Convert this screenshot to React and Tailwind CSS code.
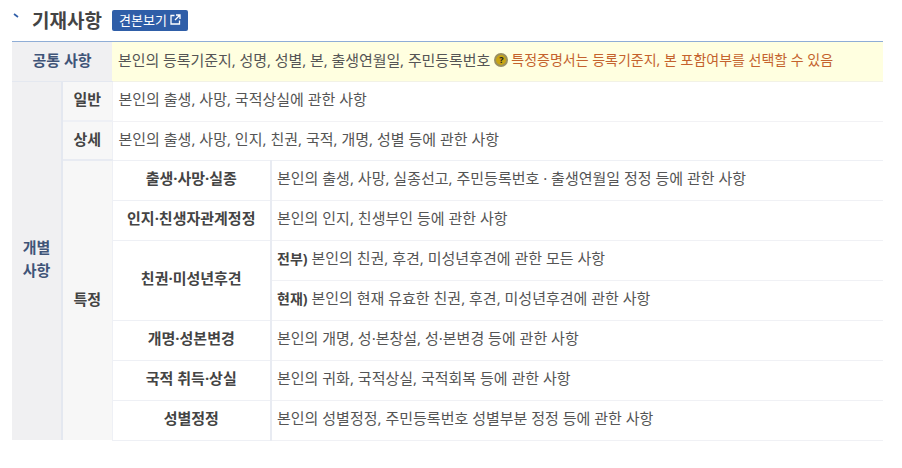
import React from "react"

const rows = [
  { name: "출생·사망·실종", text: "본인의 출생, 사망, 실종선고, 주민등록번호 · 출생연월일 정정 등에 관한 사항" },
  { name: "인지·친생자관계정정", text: "본인의 인지, 친생부인 등에 관한 사항" },
  { name: "친권·미성년후견", span: 2, bold: "전부)", text: " 본인의 친권, 후견, 미성년후견에 관한 모든 사항" },
  { bold: "현재)", text: " 본인의 현재 유효한 친권, 후견, 미성년후견에 관한 사항" },
  { name: "개명·성본변경", text: "본인의 개명, 성·본창설, 성·본변경 등에 관한 사항" },
  { name: "국적 취득·상실", text: "본인의 귀화, 국적상실, 국적회복 등에 관한 사항" },
  { name: "성별정정", text: "본인의 성별정정, 주민등록번호 성별부분 정정 등에 관한 사항" },
]

function App() {
  return (
    <div className="w-[902px] h-[468px] bg-white pl-3 pr-[19px] text-[15px] text-[#555] font-['Noto_Sans','Noto_Sans_CJK_KR',sans-serif]">
      <div className="h-[41px] flex items-start pt-[10px]">
        <span className="w-[20px] pt-[3px] pl-px">
          <svg width="6" height="5" viewBox="0 0 6 5" fill="none" stroke="#2f5ea8" strokeWidth="1.6">
            <path d="M1 1l4 3" />
          </svg>
        </span>
        <h2 className="text-[19px] font-bold leading-[22px] text-[#444]">기재사항</h2>
        <a className="ml-[10px] h-[21px] w-[76px] flex items-center justify-center gap-[3px] rounded-[2px] bg-[#2f5ea8] text-white text-[13px]">
          견본보기
          <svg width="11" height="11" viewBox="0 0 11 11" fill="none" stroke="white" strokeWidth="1.3" className="mb-[3px]">
            <path d="M4.5 1.5H1v8.5h8.5V6.5" />
            <path d="M5 6l4.5-4.5M6 1h4v4" />
          </svg>
        </a>
      </div>
      <div className="w-[871px] border-t border-[#8fadd6]">
        <table className="w-full table-fixed border-collapse [&_td]:pb-[3px] [&_th]:pb-[3px]">
          <colgroup>
            <col className="w-[50px]" />
            <col className="w-[50px]" />
            <col className="w-[159px]" />
            <col className="w-[612px]" />
          </colgroup>
          <tbody>
            <tr className="h-[39px]">
              <th colSpan={2} className="bg-[#f0f0f2] border-b border-[#e4e8f0] text-[#3f5478] font-bold">공통 사항</th>
              <td colSpan={2} className="bg-[#ffffe0] border-b border-[#f2f2e6] pl-[6px]">
                <div className="flex items-center whitespace-nowrap">
                  <span className="tracking-[-0.07px]">본인의 등록기준지, 성명, 성별, 본, 출생연월일, 주민등록번호</span>
                  <span className="ml-[4px] mr-[3px] w-[14px] h-[14px] rounded-full bg-[#c9a514] border-2 border-[#9a9060] text-[#222] text-[9px] font-bold flex items-center justify-center">?</span>
                  <span className="text-[14px] text-[#c4622d]">특정증명서는 등록기준지, 본 포함여부를 선택할 수 있음</span>
                </div>
              </td>
            </tr>
            <tr className="h-[40px]">
              <th rowSpan={9} className="bg-[#f0f0f2] border-r-2 border-[#e4e8f0] text-[#3f5478] font-bold leading-[23px]">개별<br />사항</th>
              <th className="bg-[#f7f7f7] border-b-2 border-[#eef0f5] text-[#444] font-bold">일반</th>
              <td colSpan={2} className="pl-[6px] border-l border-b border-[#f2f2f5]">본인의 출생, 사망, 국적상실에 관한 사항</td>
            </tr>
            <tr className="h-[39px]">
              <th className="bg-[#f7f7f7] border-b-2 border-[#e8ebf2] text-[#444] font-bold">상세</th>
              <td colSpan={2} className="pl-[6px] border-l border-b border-[#eef0f5]">본인의 출생, 사망, 인지, 친권, 국적, 개명, 성별 등에 관한 사항</td>
            </tr>
            {rows.map((r, i) => (
              <tr key={i} className="h-[40px]">
                {i === 0 && <th rowSpan={7} className="bg-[#f7f7f7] text-[#444] font-bold">특정</th>}
                {r.name && (
                  <th rowSpan={r.span || 1} className="border-l border-b border-[#eef0f5] text-[#444] font-bold">{r.name}</th>
                )}
                <td className="pl-[5px] border-l-2 border-l-[#e8ebf2] border-b border-b-[#f0f1f5] whitespace-nowrap">
                  {r.bold && <b className="text-[#444] text-[14px]">{r.bold}</b>}
                  {r.text}
                </td>
              </tr>
            ))}
          </tbody>
        </table>
      </div>
    </div>
  )
}

export default App
